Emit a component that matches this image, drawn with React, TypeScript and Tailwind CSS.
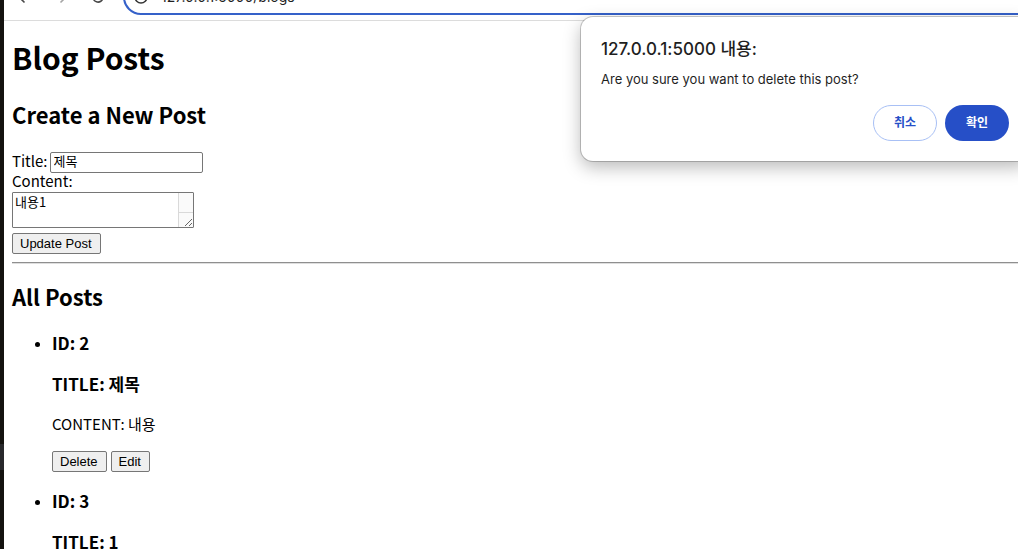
import type { ReactNode } from "react";

type Post = { id: number; title: string; content: string };

const posts: Post[] = [
  { id: 2, title: "제목", content: "내용" },
  { id: 3, title: "1", content: "1" },
];

function NativeButton({ children, type = "button" }: { children: ReactNode; type?: "button" | "submit" }) {
  return (
    <button
      type={type}
      className="h-[21px] rounded-[2px] border border-[#767676] bg-[#efefef] pr-2 pl-[7px] font-['Liberation_Sans',sans-serif] text-[13px] leading-[19px] text-black"
    >
      {children}
    </button>
  );
}

function Toolbar() {
  return (
    <header className="flex h-[21px] shrink-0 items-end overflow-hidden border-b border-[#dcdcdc] bg-white pb-[5px]">
      <div className="flex h-9 w-[119px] shrink-0 items-center gap-[17px] pl-[10px] text-[#474747]">
        <button type="button" aria-label="Back" className="h-5 w-5">
          <svg viewBox="0 0 20 20" className="h-5 w-5" fill="none" stroke="currentColor" strokeWidth="1.6">
            <path d="M15 10H5M10.500 4.500 5 10l5.500 5.500" />
          </svg>
        </button>
        <button type="button" aria-label="Forward" className="h-5 w-5 text-[#a5a5a5]">
          <svg viewBox="0 0 20 20" className="h-5 w-5" fill="none" stroke="currentColor" strokeWidth="1.6">
            <path d="M5 10h10M9.500 4.500 15 10l-5.500 5.500" />
          </svg>
        </button>
        <button type="button" aria-label="Reload" className="h-5 w-5">
          <svg viewBox="0 0 20 20" className="h-5 w-5" fill="none" stroke="currentColor" strokeWidth="1.6">
            <path d="M15 10.500A5 5 0 1 1 13.500 6.500L15 8M15 4.500V8h-3.500" />
          </svg>
        </button>
      </div>
      <div className="-mr-5 flex h-9 min-w-0 flex-1 items-center rounded-full border-2 border-[#3561c9] bg-white pl-2">
        <svg viewBox="0 0 16 16" className="h-4 w-4 shrink-0" fill="none" stroke="#333" strokeWidth="1.500" aria-hidden="true">
          <circle cx="8" cy="8" r="6" />
          <path d="M8 7v4M8 4.500v1.200" />
        </svg>
        <input
          aria-label="Address"
          defaultValue="127.0.0.1:5000/blogs"
          className="ml-3 min-w-0 flex-1 bg-transparent font-['Inter',sans-serif] text-[14px] text-[#1f1f1f] outline-none"
        />
      </div>
    </header>
  );
}

function ConfirmDialog() {
  return (
    <div
      role="alertdialog"
      aria-labelledby="dialog-title"
      aria-describedby="dialog-text"
      className="absolute top-[17px] left-[581px] w-[448px] rounded-xl bg-white p-5 font-['Inter','Noto_Sans_CJK_KR',sans-serif] text-[#1f1f1f] shadow-[0_0_0_1px_rgba(0,0,0,0.2),0_6px_18px_rgba(0,0,0,0.28)]"
    >
      <h2 id="dialog-title" className="text-[17px] leading-6 font-medium">
        127.0.0.1:5000 내용:
      </h2>
      <p id="dialog-text" className="mt-2 text-[13px] leading-5">
        Are you sure you want to delete this post?
      </p>
      <div className="mt-4 flex justify-end gap-2 text-[12px] font-bold">
        <button type="button" className="h-9 w-16 rounded-full border border-[#a8c0f5] text-[#264fc7]">
          취소
        </button>
        <button type="button" className="h-9 w-16 rounded-full bg-[#264fc7] text-white">
          확인
        </button>
      </div>
    </div>
  );
}

export default function App() {
  return (
    <div className="relative flex h-screen overflow-hidden bg-white font-['Noto_Sans_CJK_KR',sans-serif] text-[16px] leading-5 text-black">
      <div className="flex w-1 shrink-0 flex-col bg-[#14120f]" aria-hidden="true">
        <div className="mt-[444px] h-[26px] bg-[#28282b]" />
      </div>
      <div className="flex min-w-0 flex-1 flex-col">
        <Toolbar />
        <main className="pt-[17px] pl-2">
          <h1 className="text-[30px] leading-[38px] font-bold">Blog Posts</h1>
          <h2 className="mt-6 text-[22px] leading-7 font-bold">Create a New Post</h2>
          <form className="mt-[23px]" onSubmit={(e) => e.preventDefault()}>
            <div className="flex items-end gap-[2px] text-[15px] leading-5">
              <label htmlFor="title" className="h-[22px]">
                Title:
              </label>
              <input
                id="title"
                defaultValue="제목"
                className="h-[21px] w-[153px] rounded-[2px] border border-[#767676] px-[3px] pb-1 text-[13px] leading-4"
              />
            </div>
            <label htmlFor="content" className="block pb-[3px] text-[15px] leading-4">
              Content:
            </label>
            <div className="flex h-9 w-[182px] rounded-[1px] border border-[#767676]">
              <textarea
                id="content"
                defaultValue="내용1"
                className="min-w-0 flex-1 resize-none overflow-hidden px-[2px] text-[13px] leading-[18px] outline-none"
              />
              <div className="flex w-[15px] flex-col border-l border-[#d9d9d9] bg-[#fafafa]" aria-hidden="true">
                <div className="flex-1 border-b border-[#d9d9d9]" />
                <svg viewBox="0 0 14 14" className="h-[14px] w-[14px]" stroke="#666" strokeWidth="1">
                  <path d="M6 13 13 6M10 13l3-3" />
                </svg>
              </div>
            </div>
            <div className="mt-[5px] flex">
              <NativeButton type="submit">Update Post</NativeButton>
            </div>
          </form>
          <hr className="mt-2 h-[2px] border-t border-b border-t-[#8f8f8f] border-b-[#dedede]" />
          <h2 className="mt-[18px] text-[22px] leading-7 font-bold">All Posts</h2>
          <ul className="mt-[22px] list-disc pl-10 marker:text-[13px]">
            {posts.map((post) => (
              <li key={post.id} className="mb-[18px]">
                <h3 className="text-[17px] leading-[22px] font-bold">ID: {post.id}</h3>
                <h3 className="mt-[19px] text-[17px] leading-[22px] font-bold">TITLE: {post.title}</h3>
                <p className="mt-[19px] text-[15px] leading-5">CONTENT: {post.content}</p>
                <div className="mt-[17px] flex gap-1">
                  <NativeButton>Delete</NativeButton>
                  <NativeButton>Edit</NativeButton>
                </div>
              </li>
            ))}
          </ul>
        </main>
      </div>
      <ConfirmDialog />
    </div>
  );
}
